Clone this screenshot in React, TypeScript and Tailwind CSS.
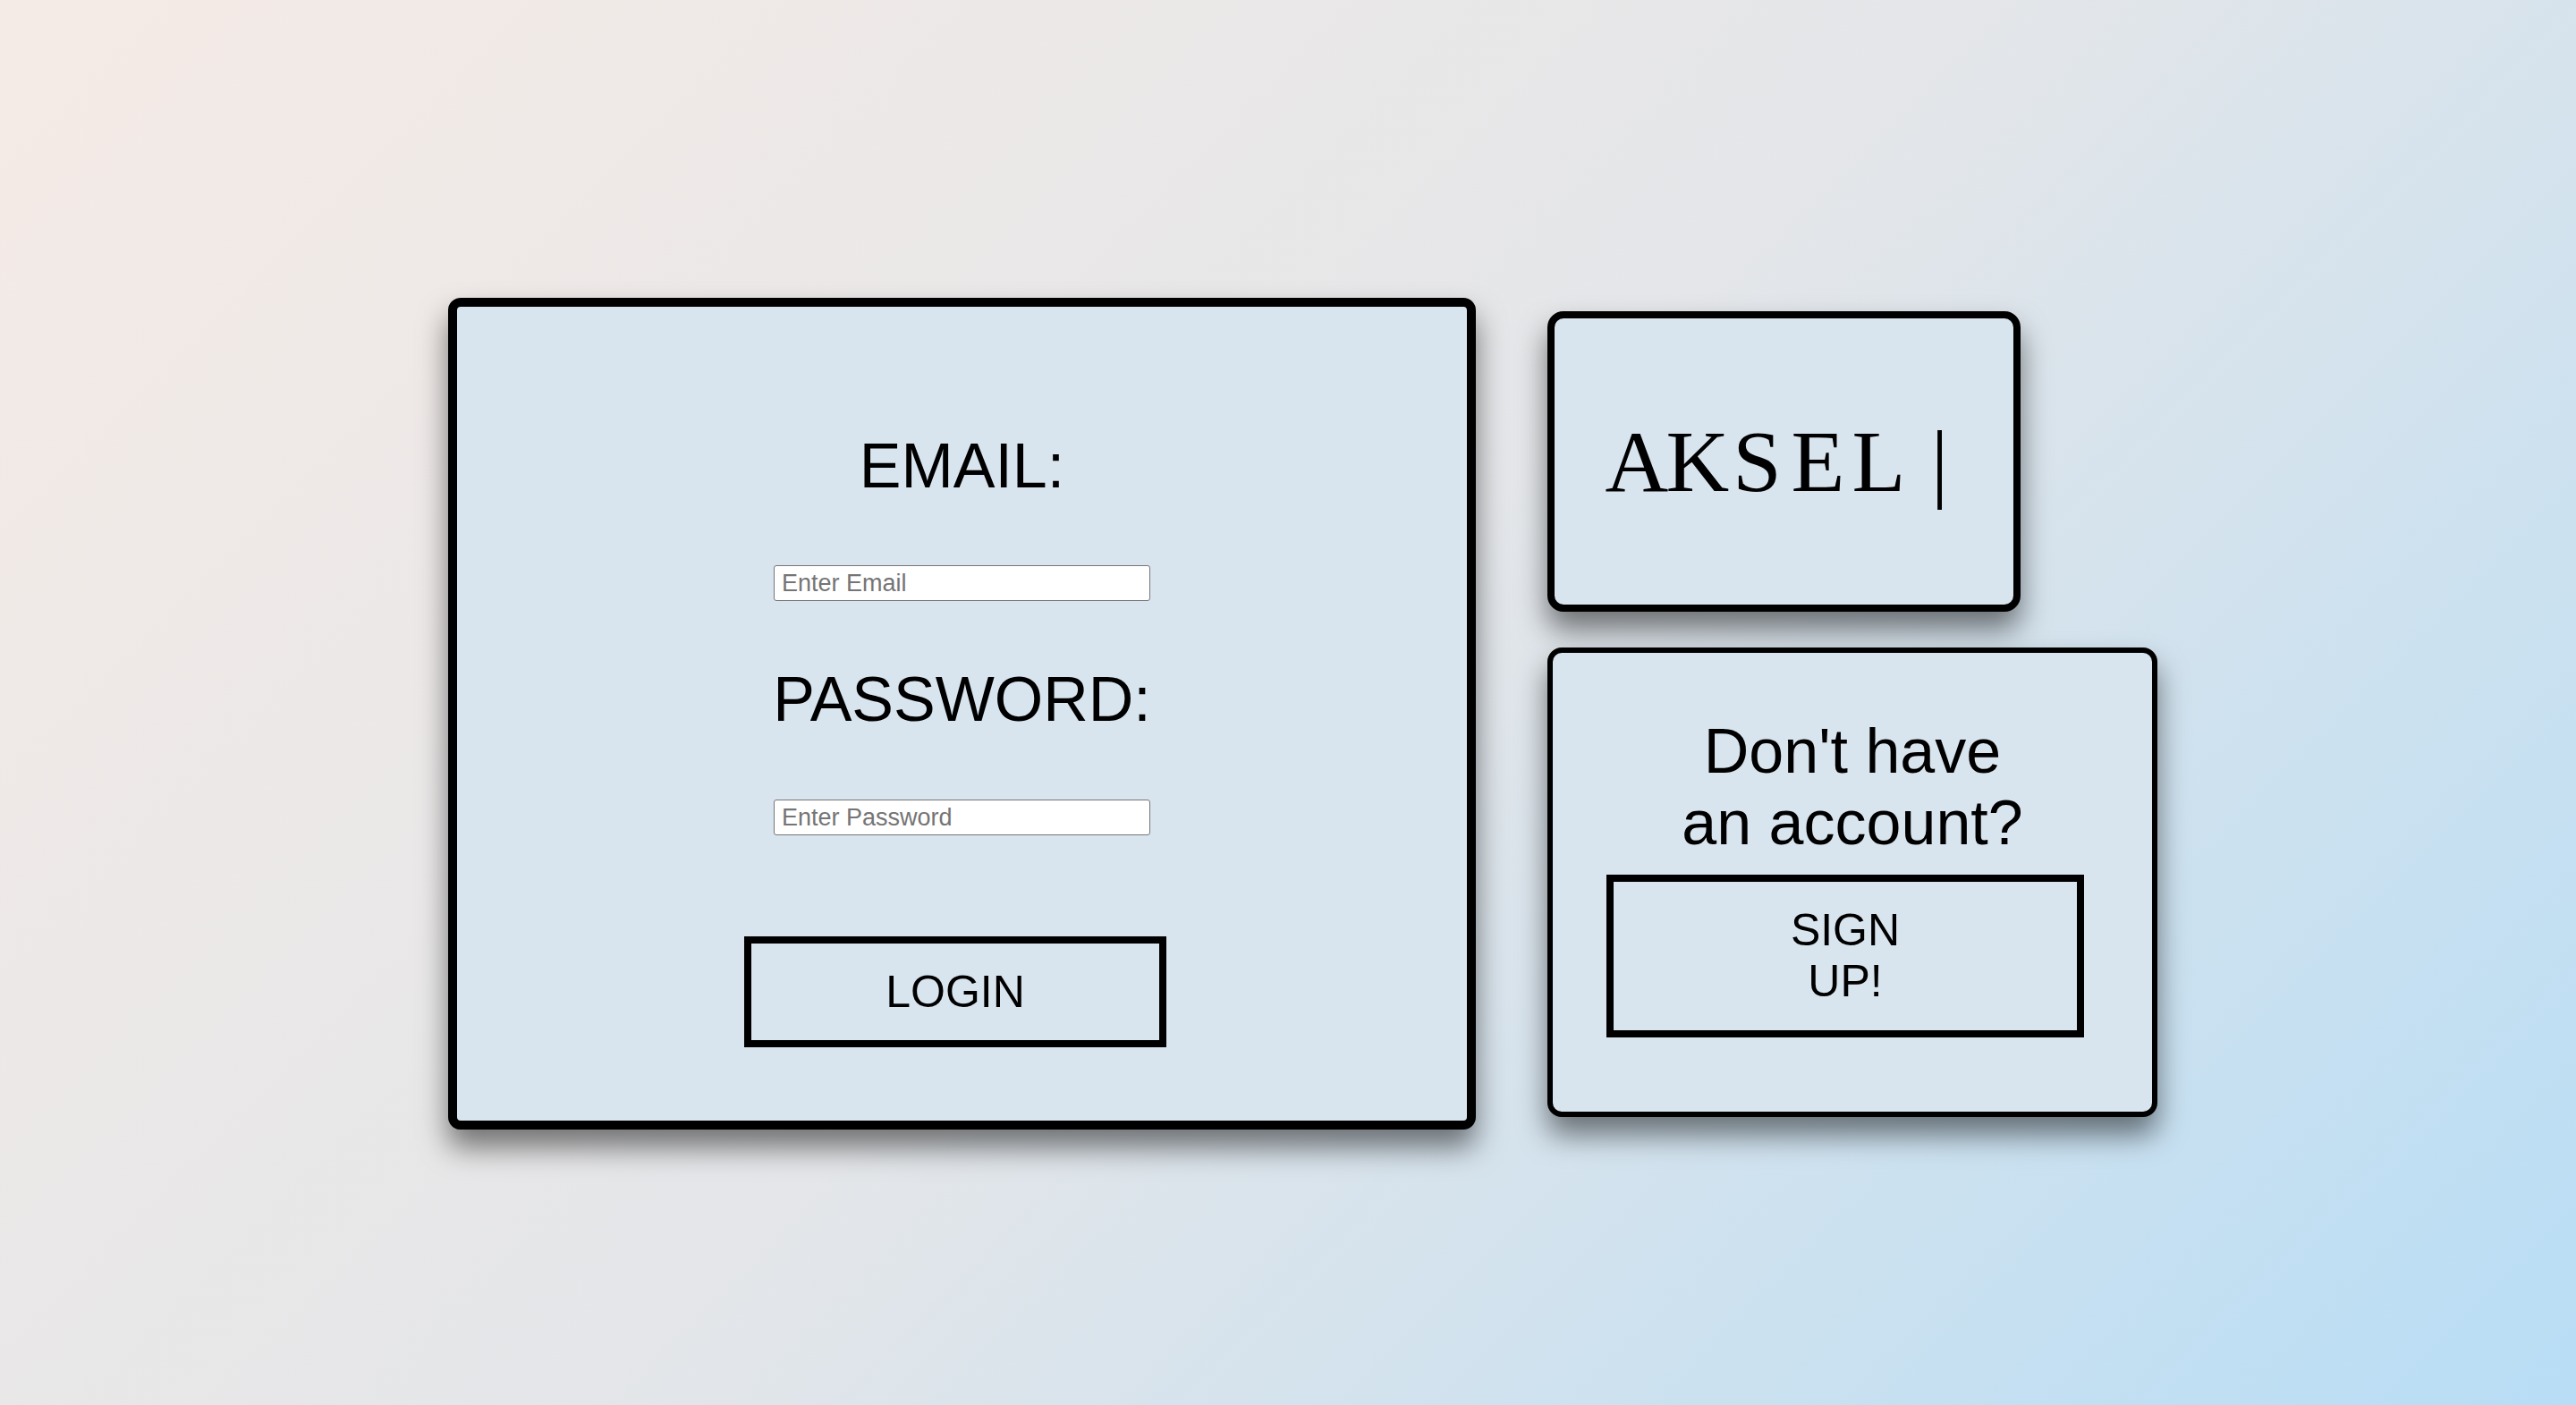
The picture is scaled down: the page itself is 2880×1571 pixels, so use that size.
const brand = ["A", "K", "S", "E", "L", "|"];

export default function App() {
  const sans = "font-['Liberation_Sans',Arial,sans-serif]";

  return (
    <div
      className={`min-h-screen w-full flex items-center justify-center pt-[25px] pl-[33px] bg-[linear-gradient(135deg,#f5ebe6_0%,#e4e6e9_50%,#b8ddf5_100%)] text-black ${sans}`}
    >
      <div className="flex items-center gap-[80px]">
        {/* login card */}
        <div className="w-[1149px] h-[930px] bg-[#d8e4ee] border-[10px] border-black rounded-[14px] shadow-[0_20px_32px_rgba(0,0,0,0.5)] flex flex-col items-center pt-[138px]">
          <h2 className="text-[70px] leading-[80px] font-normal">EMAIL:</h2>
          <input
            type="email"
            placeholder="Enter Email"
            className="mt-[71px] w-[421px] h-[40px] bg-white border border-[#767676] rounded-[3px] px-[8px] text-[27px] placeholder:text-[#757575] outline-none"
          />
          <h2 className="mt-[70px] text-[70px] leading-[80px] font-normal">PASSWORD:</h2>
          <input
            type="password"
            placeholder="Enter Password"
            className="mt-[72px] w-[421px] h-[40px] bg-white border border-[#767676] rounded-[3px] px-[8px] text-[27px] placeholder:text-[#757575] outline-none"
          />
          <button className="mt-[113px] mr-[15px] w-[472px] h-[124px] border-[8px] border-black bg-transparent text-[50px] leading-none">
            LOGIN
          </button>
        </div>

        {/* right column */}
        <div className="flex flex-col items-start gap-[40px]">
          <div className="w-[529px] h-[336px] bg-[#d8e4ee] border-[8px] border-black rounded-[18px] shadow-[0_20px_32px_rgba(0,0,0,0.5)] flex items-center justify-center">
            <span className="flex items-baseline font-['Liberation_Serif','Courier_New',serif] text-[98px] leading-none pl-[8px]">
              {brand.map((c, i) => (
                <span key={i} className="w-[68px] text-center">
                  {c}
                </span>
              ))}
            </span>
          </div>

          <div className="w-[682px] h-[525px] bg-[#d8e4ee] border-[6px] border-black rounded-[16px] shadow-[0_20px_32px_rgba(0,0,0,0.5)] flex flex-col items-start pt-[70px]">
            <p className="self-center text-[70px] leading-[80px] text-center">
              Don't have
              <br />
              an account?
            </p>
            <button className="mt-[18px] ml-[60px] w-[534px] h-[182px] border-[8px] border-black bg-transparent text-[50px] leading-[57px] text-center">
              SIGN
              <br />
              UP!
            </button>
          </div>
        </div>
      </div>
    </div>
  );
}
